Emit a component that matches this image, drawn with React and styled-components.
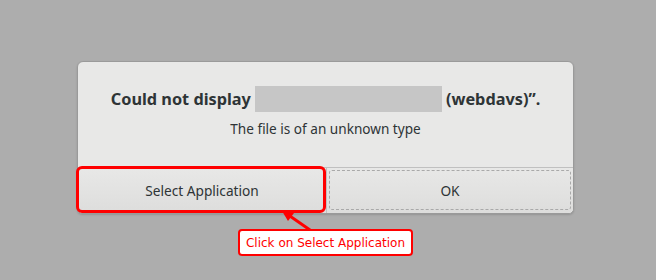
import React from "react";
import styled, { createGlobalStyle } from "styled-components";

const Global = createGlobalStyle`
  html, body { margin: 0; padding: 0; background: #adadad; }
  body { font-family: "Noto Sans", "DejaVu Sans", sans-serif; }
`;

const Stage = styled.div`
  position: relative;
  width: 656px;
  height: 280px;
  padding: 61px 0 0 77px;
  box-sizing: border-box;
`;

const Dialog = styled.div`
  position: relative;
  width: 497px;
  box-sizing: border-box;
  background: #e8e8e7;
  border: 1px solid #9a9a9a;
  border-radius: 6px 6px 5px 5px;
  box-shadow: 0 1px 2px rgba(0, 0, 0, 0.15);
  display: flex;
  flex-direction: column;
`;

const Body = styled.div`
  height: 105px;
  display: flex;
  flex-direction: column;
  align-items: center;
  padding-top: 24px;
  box-sizing: border-box;
  color: #2e3436;
`;

const Title = styled.div`
  display: flex;
  align-items: center;
  gap: 4px;
  font-size: 16.3px;
  font-weight: 700;
  height: 26px;
`;

const Redacted = styled.span`
  display: inline-block;
  width: 187px;
  height: 26px;
  background: #c6c6c6;
`;

const Subtitle = styled.div`
  margin-top: 7px;
  font-size: 13.6px;
  color: #2e3436;
`;

const ButtonRow = styled.div`
  display: grid;
  grid-template-columns: 248px 1fr;
  border-top: 1px solid #c0c0c0;
  height: 45px;
`;

const DialogButton = styled.div`
  position: relative;
  display: flex;
  align-items: center;
  justify-content: center;
  font-size: 13.7px;
  color: #2e3436;
  background: linear-gradient(#e8e8e7, #dddddc);
  border-left: ${(p) => (p.$divider ? "1px solid #c0c0c0" : "none")};
  border-radius: ${(p) => (p.$divider ? "0 0 5px 0" : "0 0 0 5px")};
  &::after {
    content: "";
    display: ${(p) => (p.$focus ? "block" : "none")};
    position: absolute;
    inset: 2px 2px 3px 2px;
    border: 1px dashed #a9a9a9;
    border-radius: 3px;
  }
`;

const Highlight = styled.div`
  position: absolute;
  left: -2px;
  top: 104px;
  width: 250px;
  height: 47px;
  box-sizing: border-box;
  border: 3px solid #ff0000;
  border-radius: 6px;
`;

const Arrow = styled.svg`
  position: absolute;
  left: 270px;
  top: 205px;
  overflow: visible;
`;

const Callout = styled.div`
  position: absolute;
  left: 238px;
  top: 229px;
  width: 175px;
  height: 27px;
  box-sizing: border-box;
  background: #ffffff;
  border: 2px solid #ff0000;
  border-radius: 4px;
  display: flex;
  align-items: center;
  justify-content: center;
  font-family: "DejaVu Sans", Verdana, sans-serif;
  font-size: 12px;
  color: #ff0000;
  white-space: nowrap;
`;

export default function App() {
  return (
    <>
      <Global />
      <Stage>
        <Dialog>
          <Body>
            <Title>
              <span>Could not display</span>
              <Redacted />
              <span>(webdavs)”.</span>
            </Title>
            <Subtitle>The file is of an unknown type</Subtitle>
          </Body>
          <ButtonRow>
            <DialogButton>Select Application</DialogButton>
            <DialogButton $divider $focus>OK</DialogButton>
          </ButtonRow>
          <Highlight />
        </Dialog>
        <Arrow width="60" height="40" viewBox="0 0 60 40">
          <line x1="40" y1="25" x2="17" y2="9" stroke="#ff0000" strokeWidth="3" />
          <polygon points="12,6 24,8 18,16" fill="#ff0000" />
        </Arrow>
        <Callout>Click on Select Application</Callout>
      </Stage>
    </>
  );
}
